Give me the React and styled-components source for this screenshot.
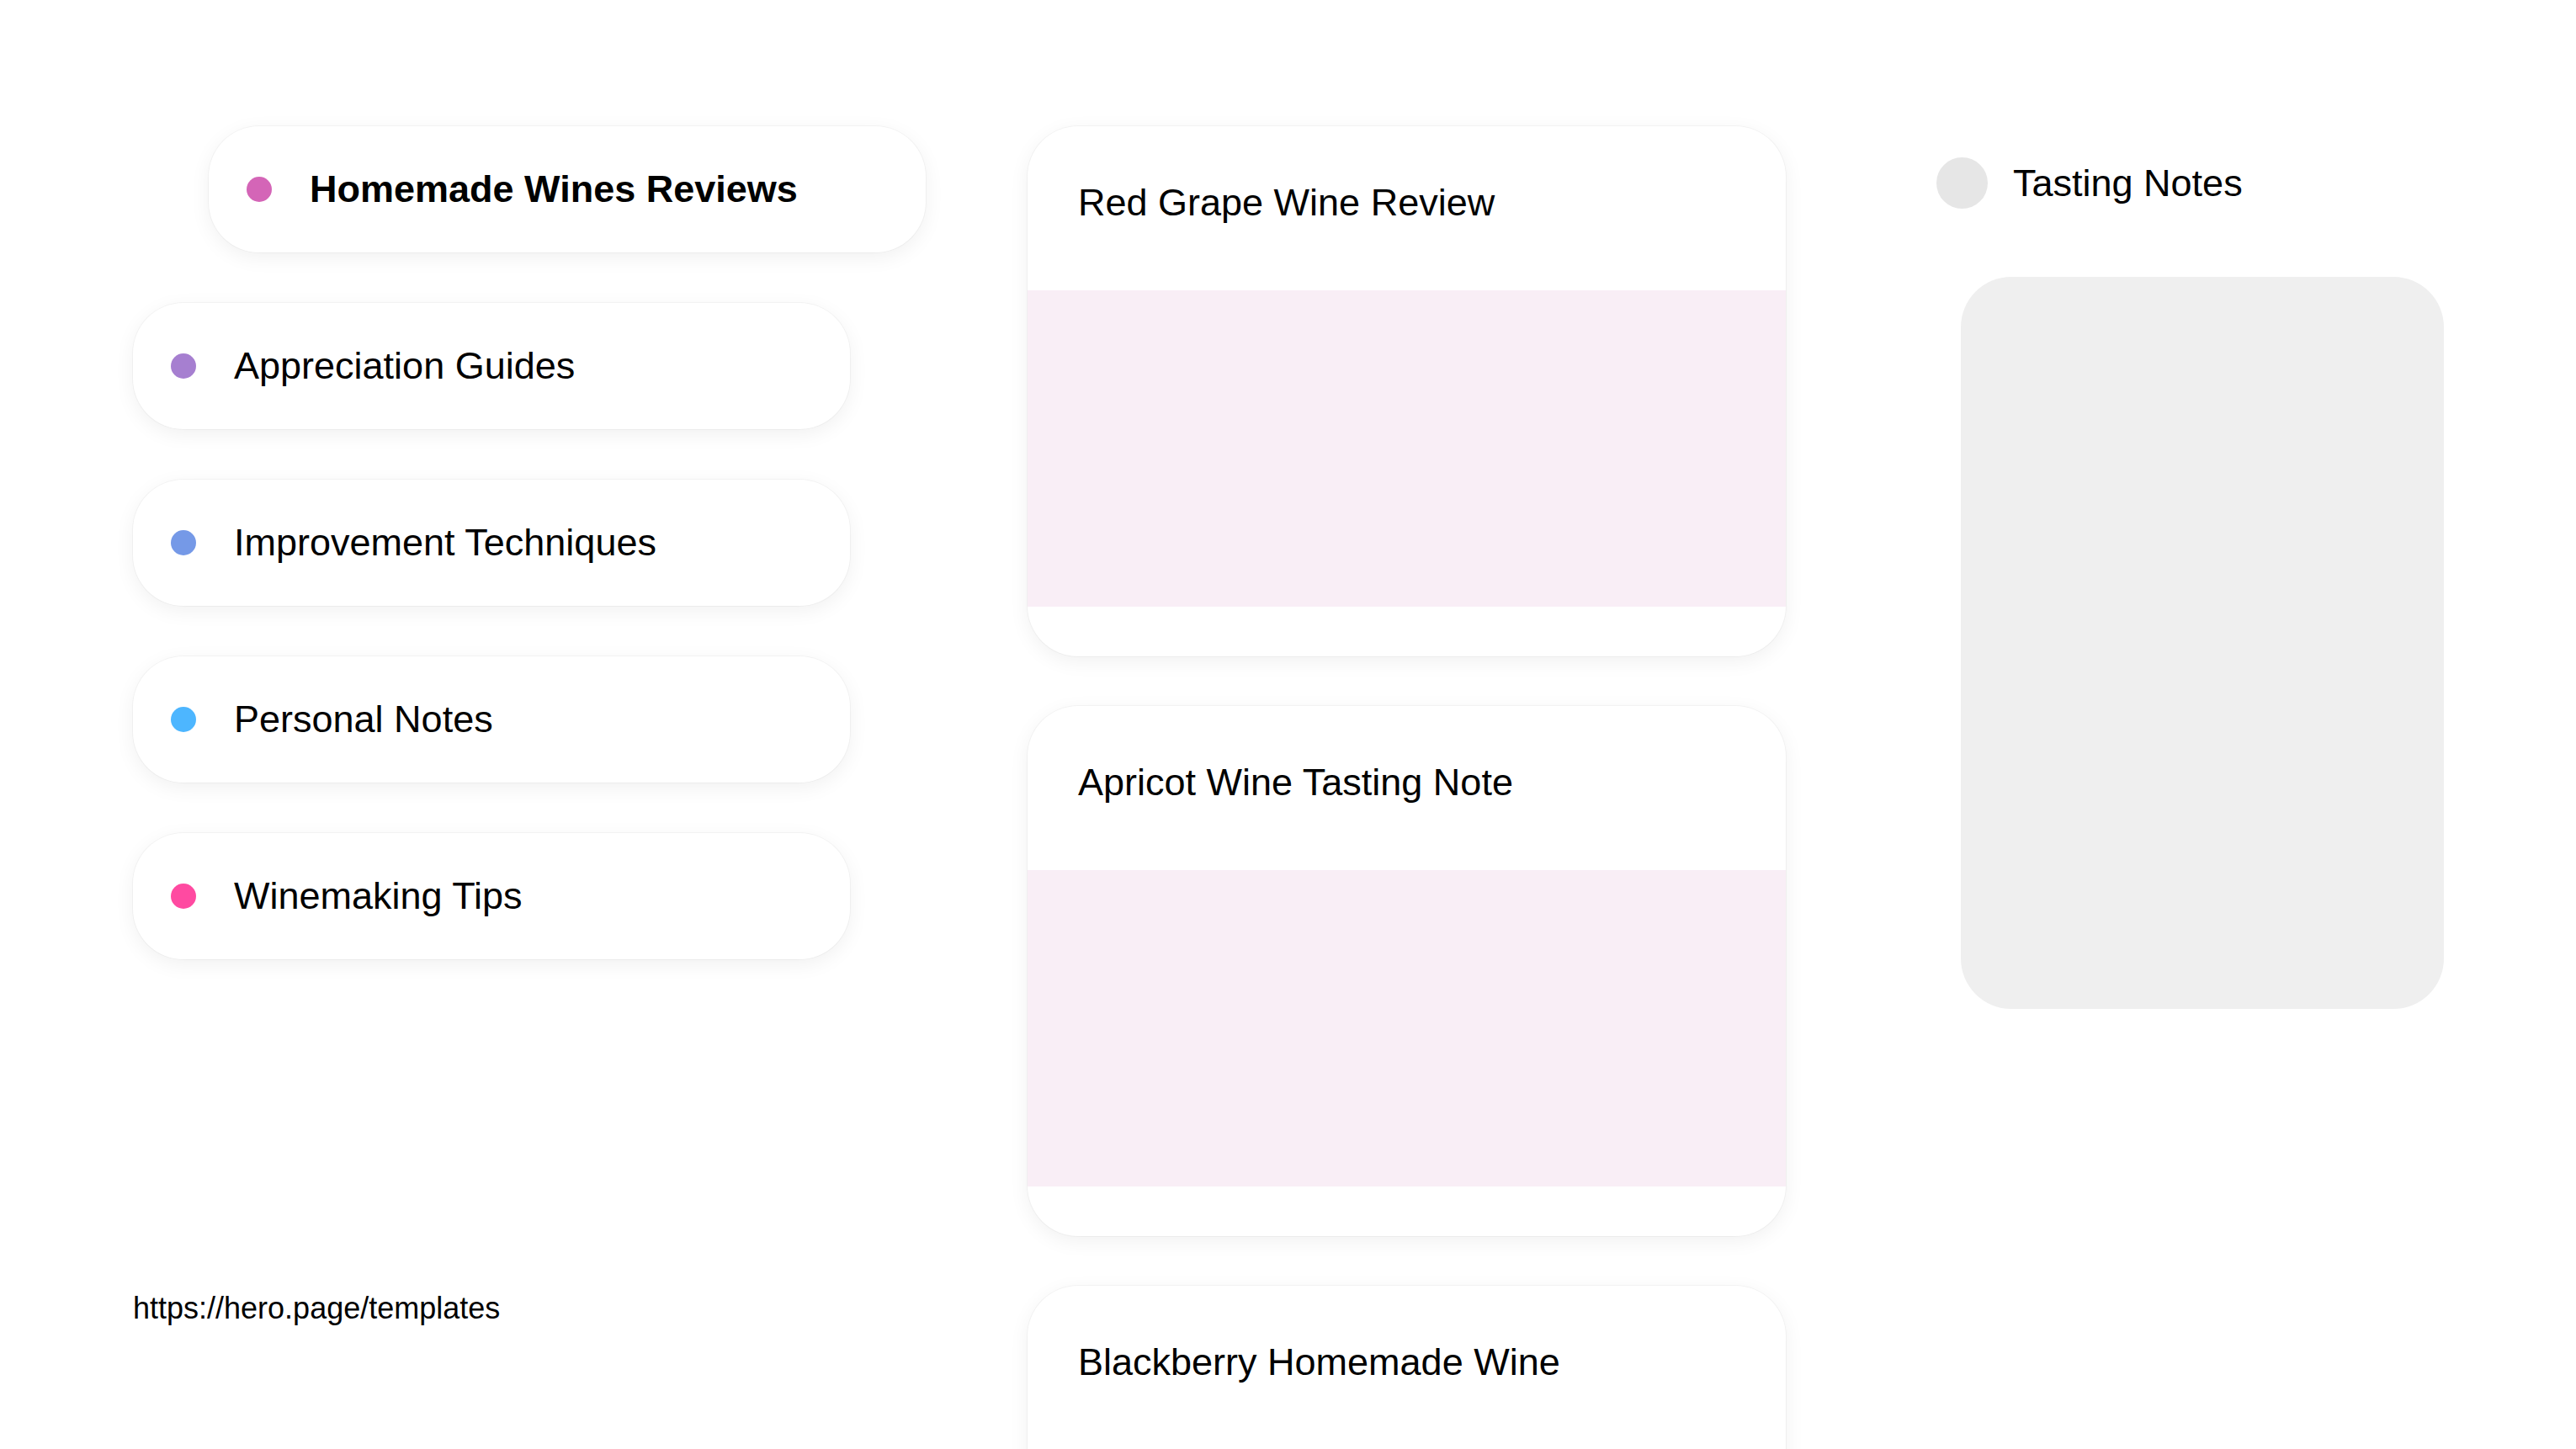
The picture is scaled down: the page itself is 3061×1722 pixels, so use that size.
import React from "react";
import styled, { createGlobalStyle } from "styled-components";

const Global = createGlobalStyle`
  html, body {
    margin: 0;
    padding: 0;
    background: #ffffff;
    overflow: hidden;
    height: 1722px;
  }
  * { box-sizing: border-box; }
  body {
    font-family: "Liberation Sans", Arial, sans-serif;
    color: #000;
  }
`;

const Page = styled.div`
  display: flex;
  align-items: flex-start;
  padding: 150px 0 0 158px;
  height: 1722px;
  overflow: hidden;
`;

const LeftColumn = styled.div`
  width: 953px;
  display: flex;
  flex-direction: column;
  align-items: flex-start;
`;

const NavList = styled.nav`
  display: flex;
  flex-direction: column;
  gap: 60px;
`;

const NavItem = styled.div`
  width: 852px;
  height: 150px;
  margin-left: ${(p) => (p.$active ? "90px" : "0")};
  background: #fff;
  border-radius: 60px;
  box-shadow: 0 0 0 1px rgba(0, 0, 0, 0.035), 0 6px 24px rgba(0, 0, 0, 0.06);
  display: flex;
  align-items: center;
  padding-left: 45px;
  gap: 45px;
`;

const Dot = styled.span`
  width: 30px;
  height: 30px;
  border-radius: 50%;
  background: ${(p) => p.$color};
  flex-shrink: 0;
`;

const NavLabel = styled.span`
  font-size: 45px;
  font-weight: ${(p) => (p.$active ? 700 : 400)};
  color: #000;
  white-space: nowrap;
`;

const Url = styled.div`
  margin-top: 394px;
  font-size: 36px;
  color: #000;
`;

const MiddleColumn = styled.div`
  width: 901px;
  margin-left: 110px;
  display: flex;
  flex-direction: column;
  gap: 59px;
`;

const Card = styled.article`
  width: 901px;
  height: 630px;
  background: #fff;
  border-radius: 60px;
  overflow: hidden;
  box-shadow: 0 0 0 1px rgba(0, 0, 0, 0.035), 0 6px 24px rgba(0, 0, 0, 0.06);
  display: flex;
  flex-direction: column;
  flex-shrink: 0;
`;

const CardHeader = styled.div`
  height: 195px;
  padding: 65px 0 0 60px;
  font-size: 45px;
  color: #000;
  white-space: nowrap;
`;

const CardMedia = styled.div`
  height: 376px;
  background: #f9eef6;
`;

const RightColumn = styled.div`
  margin-left: 179px;
  margin-top: 37px;
  display: flex;
  flex-direction: column;
`;

const SectionHeading = styled.div`
  display: flex;
  align-items: center;
  gap: 30px;
  font-size: 45px;
  color: #000;
  white-space: nowrap;
`;

const GreyDot = styled.span`
  width: 61px;
  height: 61px;
  border-radius: 50%;
  background: #e6e6e6;
  flex-shrink: 0;
`;

const Panel = styled.div`
  margin: 81px 0 0 29px;
  width: 574px;
  height: 870px;
  border-radius: 60px;
  background: #efefef;
`;

const navItems = [
  { label: "Homemade Wines Reviews", color: "#d465b7", active: true },
  { label: "Appreciation Guides", color: "#a67fd0" },
  { label: "Improvement Techniques", color: "#7599e7" },
  { label: "Personal Notes", color: "#4db6ff" },
  { label: "Winemaking Tips", color: "#ff4aa1" },
];

const cards = [
  { title: "Red Grape Wine Review" },
  { title: "Apricot Wine Tasting Note" },
  { title: "Blackberry Homemade Wine" },
];

export default function App() {
  return (
    <>
      <Global />
      <Page>
        <LeftColumn>
          <NavList>
            {navItems.map((item) => (
              <NavItem key={item.label} $active={item.active}>
                <Dot $color={item.color} />
                <NavLabel $active={item.active}>{item.label}</NavLabel>
              </NavItem>
            ))}
          </NavList>
          <Url>https://hero.page/templates</Url>
        </LeftColumn>
        <MiddleColumn>
          {cards.map((c) => (
            <Card key={c.title}>
              <CardHeader>{c.title}</CardHeader>
              <CardMedia />
            </Card>
          ))}
        </MiddleColumn>
        <RightColumn>
          <SectionHeading>
            <GreyDot />
            <span>Tasting Notes</span>
          </SectionHeading>
          <Panel />
        </RightColumn>
      </Page>
    </>
  );
}
